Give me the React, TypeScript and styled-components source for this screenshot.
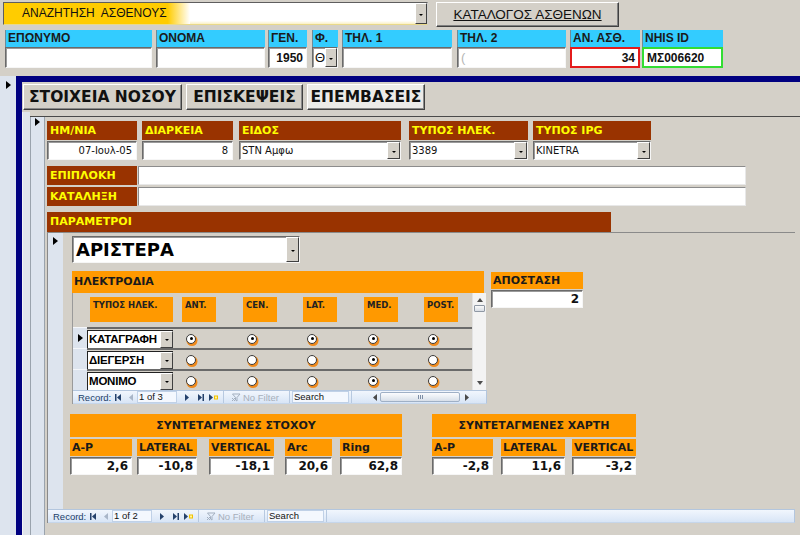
import React from "react";
import styled, { createGlobalStyle, css } from "styled-components";

const Global = createGlobalStyle`
  *, *::before, *::after { box-sizing: border-box; }
  html, body { margin: 0; padding: 0; background: #d4d0c8; }
  body { font-family: "Liberation Sans", Arial, sans-serif; }
  #root { width: 800px; height: 535px; overflow: hidden; }
`;

const sunken = css`
  background: #fff;
  border-style: solid;
  border-width: 1px;
  border-color: #6a6a6a #f6f6f6 #f6f6f6 #6a6a6a;
  box-shadow: inset 1px 1px 0 #9a9a9a;
`;

const Screen = styled.div`
  width: 800px;
  height: 535px;
  background: #d4d0c8;
  display: flex;
  flex-direction: column;
  overflow: hidden;
`;

/* ---------------- header ---------------- */
const Header = styled.div`
  flex: none;
  height: 76px;
  display: flex;
  flex-direction: column;
`;

const SearchRow = styled.div`
  display: flex;
  align-items: flex-start;
  padding: 2px 0 0 3px;
  height: 27px;
`;

const SearchCombo = styled.div`
  width: 425px;
  height: 23px;
  display: flex;
  background: linear-gradient(#ffffff 0, #ffffff 85%, #fbf1c4 100%);
  border: 1px solid #5e5e5e;
  border-right-color: #cfcfcf;
  border-bottom-color: #e9d98a;
`;

const SearchLabel = styled.div`
  width: 186px;
  height: 100%;
  background: linear-gradient(90deg, #ffcc00 0, #ffcc00 88%, #ffffff 100%);
  font-size: 12px;
  color: #111;
  line-height: 21px;
  padding-left: 18px;
  white-space: pre;
`;

const DropBtn = styled.span<{ $w?: number }>`
  flex: none;
  width: ${(p) => p.$w ?? 12}px;
  margin-left: auto;
  align-self: stretch;
  background: #d4d0c8;
  border-style: solid;
  border-width: 1px;
  border-color: #ffffff #404040 #404040 #ffffff;
  display: flex;
  align-items: center;
  justify-content: center;
  &::after {
    content: "";
    border-left: 2px solid transparent;
    border-right: 2px solid transparent;
    border-top: 2px solid #000;
    margin-top: 2px;
  }
`;

const CatalogBtn = styled.div`
  margin-left: 8px;
  width: 183px;
  height: 25px;
  background: #d4d0c8;
  border: 1px solid;
  border-color: #ffffff #404040 #404040 #ffffff;
  box-shadow: inset -1px -1px 0 #808080;
  font-size: 13.5px;
  text-decoration: underline;
  color: #111;
  display: flex;
  align-items: center;
  justify-content: center;
`;

const TopFieldsRow = styled.div`
  display: flex;
  margin-top: 3px;
`;

const TopField = styled.div<{ $w: number; $ml: number }>`
  width: ${(p) => p.$w}px;
  margin-left: ${(p) => p.$ml}px;
  display: flex;
  flex-direction: column;
`;

const CyanLabel = styled.div`
  height: 17px;
  background: #33ccff;
  border-left: 1px solid #6f8b96;
  font-weight: bold;
  font-size: 12px;
  line-height: 17px;
  padding-left: 2px;
  color: #1a1a1a;
  white-space: nowrap;
  overflow: hidden;
`;

const TopInput = styled.div<{ $variant?: string; $align?: string; $drop?: boolean }>`
  height: 21px;
  display: flex;
  align-items: center;
  background: #fff;
  justify-content: ${(p) => (p.$align === "right" ? "flex-end" : "flex-start")};
  padding: ${(p) => (p.$drop ? "0 0 0 2px" : "0 3px")};
  ${(p) =>
    p.$variant === "red"
      ? css`border: 2px solid #e41b1b;`
      : p.$variant === "green"
      ? css`border: 2px solid #33dd33;`
      : sunken}
`;

const TopValue = styled.span<{ $light?: boolean; $plain?: boolean }>`
  font-size: ${(p) => (p.$plain ? "13px" : "12px")};
  font-weight: ${(p) => (p.$plain ? "normal" : "bold")};
  color: ${(p) => (p.$light ? "#b5b5b5" : "#111")};
  white-space: nowrap;
`;

/* ---------------- main frame ---------------- */
const Main = styled.div`
  flex: 1;
  display: flex;
  min-height: 0;
`;

const Selector = styled.div<{ $w: number; $pt: number }>`
  flex: none;
  width: ${(p) => p.$w}px;
  background: #dde4ee;
  padding-top: ${(p) => p.$pt}px;
  display: flex;
  justify-content: center;
  align-items: flex-start;
`;

const Arrow = styled.span`
  width: 0;
  height: 0;
  border-left: 5px solid #000;
  border-top: 4px solid transparent;
  border-bottom: 4px solid transparent;
`;

const Frame = styled.div`
  flex: 1;
  min-width: 0;
  display: flex;
  flex-direction: column;
  border-top: 6px solid #000080;
  border-left: 6px solid #000080;
`;

const TabsRow = styled.div`
  flex: none;
  height: 30px;
  display: flex;
  gap: 4px;
  padding: 2px 0 0 1px;
`;

const Tab = styled.div<{ $w: number; $active?: boolean }>`
  flex: none;
  width: ${(p) => p.$w}px;
  height: 26px;
  background: ${(p) => (p.$active ? "#ecebe8" : "#d4d0c8")};
  border: 1px solid;
  border-color: #ffffff #404040 #404040 #ffffff;
  box-shadow: inset -1px -1px 0 #8a8a8a;
  font-family: "DejaVu Sans", Verdana, sans-serif;
  font-weight: bold;
  font-size: 15.5px;
  color: #111;
  display: flex;
  align-items: center;
  justify-content: center;
  white-space: nowrap;
`;

const TabBody = styled.div`
  flex: 1;
  min-height: 0;
  display: flex;
`;

const Strip = styled.div`
  flex: none;
  width: 8px;
  background: #dfe4eb;
  border-left: 1px solid #f4f4f4;
`;

const OuterSub = styled.div`
  flex: 1;
  min-width: 0;
  margin-top: 4px;
  display: flex;
  border-top: 1px solid #4a4a4a;
`;

const OuterSel = styled(Selector)`
  border-left: 1px solid #9aa3ad;
  border-right: 1px solid #9aa3ad;
`;

const OuterContent = styled.div`
  flex: 1;
  min-width: 0;
  display: flex;
  flex-direction: column;
  padding: 4px 5px 12px 2px;
`;

/* brown fields */
const FieldRow = styled.div`
  display: flex;
  flex: none;
`;

const BrownField = styled.div<{ $w: number; $ml: number }>`
  width: ${(p) => p.$w}px;
  margin-left: ${(p) => p.$ml}px;
  display: flex;
  flex-direction: column;
  gap: 1px;
`;

const BrownLabel = styled.div<{ $w?: number }>`
  flex: none;
  ${(p) => (p.$w ? `width: ${p.$w}px;` : "")}
  height: 19px;
  background: #993300;
  color: #ffff00;
  font-family: "DejaVu Sans", Verdana, sans-serif;
  font-weight: bold;
  font-size: 11px;
  line-height: 19px;
  padding-left: 3px;
  white-space: nowrap;
`;

const FormInput = styled.div<{ $align?: string }>`
  ${sunken}
  height: 19px;
  display: flex;
  align-items: center;
  justify-content: ${(p) => (p.$align === "right" ? "flex-end" : "flex-start")};
  padding: ${(p) => (p.$align === "right" ? "0 4px 0 2px" : "0 0 0 2px")};
  font-family: "DejaVu Sans", Verdana, sans-serif;
  font-size: 10px;
  color: #111;
  white-space: nowrap;
`;

const LongRow = styled.div<{ $mt: number }>`
  display: flex;
  flex: none;
  margin-top: ${(p) => p.$mt}px;
`;

const LongInput = styled.div`
  width: 608px;
  margin-left: 1px;
  height: 19px;
  background: #fff;
  border: 1px solid;
  border-color: #8c8c8c #e8e8e8 #e8e8e8 #8c8c8c;
`;

const ParamBar = styled(BrownLabel)`
  width: 564px;
  height: 20px;
  line-height: 20px;
  margin-top: 6px;
`;

/* nested subform */
const Nested = styled.div`
  flex: 1;
  min-height: 0;
  width: 748px;
  display: flex;
  flex-direction: column;
  border-top: 1px solid #8a8a8a;
  border-left: 1px solid #8a8a8a;
`;

const NestedBody = styled.div`
  flex: 1;
  min-height: 0;
  display: flex;
`;

const NestedContent = styled.div`
  flex: 1;
  display: flex;
  flex-direction: column;
  padding: 3px 0 0 9px;
`;

const BigCombo = styled.div`
  ${sunken}
  width: 228px;
  height: 27px;
  flex: none;
  display: flex;
  align-items: center;
  padding-left: 3px;
  font-family: "DejaVu Sans", Verdana, sans-serif;
  font-weight: bold;
  font-size: 18px;
  color: #000;
`;

const ElecRow = styled.div`
  display: flex;
  margin-top: 8px;
  flex: none;
`;

const ElecBlock = styled.div`
  width: 415px;
  display: flex;
  flex-direction: column;
`;

const OrangeTitle = styled.div<{ $w?: number; $center?: boolean; $h?: number }>`
  ${(p) => (p.$w ? `width: ${p.$w}px;` : "")}
  height: ${(p) => p.$h ?? 22}px;
  line-height: ${(p) => p.$h ?? 22}px;
  background: #ff9900;
  font-family: "DejaVu Sans", Verdana, sans-serif;
  font-weight: bold;
  font-size: 11px;
  color: #1a1a1a;
  padding-left: ${(p) => (p.$center ? 0 : 2)}px;
  text-align: ${(p) => (p.$center ? "center" : "left")};
  white-space: nowrap;
`;

const ContForm = styled.div`
  height: 111px;
  display: flex;
  flex-direction: column;
  border-left: 1px solid #9a9a9a;
`;

const ContMain = styled.div`
  flex: 1;
  display: flex;
  min-height: 0;
`;

const RowsArea = styled.div`
  width: 399px;
  display: flex;
  flex-direction: column;
`;

const colTemplate = "86px 9px 61px 60px 61px 60px 1fr";

const HeadRow = styled.div`
  height: 34px;
  display: flex;
`;

const SelSpacer = styled.div`
  width: 14px;
  flex: none;
`;

const HeadGrid = styled.div`
  flex: 1;
  display: grid;
  grid-template-columns: ${colTemplate};
  align-items: start;
  padding-top: 4px;
`;

const ColHead = styled.div<{ $w: number; $ml?: number }>`
  width: ${(p) => p.$w}px;
  margin-left: ${(p) => p.$ml ?? 0}px;
  height: 25px;
  background: #ff9900;
  font-family: "DejaVu Sans", Verdana, sans-serif;
  font-weight: bold;
  font-size: 8.5px;
  color: #222;
  padding: 3px 0 0 3px;
  white-space: nowrap;
`;

const ERow = styled.div`
  height: 21px;
  display: flex;
`;

const RowSel = styled.div`
  width: 14px;
  flex: none;
  background: #dde4ee;
  border-top: 1px solid #f4f6fa;
  display: flex;
  align-items: center;
  justify-content: center;
`;

const RowGrid = styled.div`
  flex: 1;
  display: grid;
  grid-template-columns: ${colTemplate};
  align-items: center;
  border-top: 2px solid #6a6a6a;
`;

const RowCombo = styled.div`
  width: 86px;
  height: 18px;
  display: flex;
  background: #fff;
  border-left: 1px solid #222;
  border-top: 1px solid #222;
  font-weight: bold;
  font-size: 11.5px;
  color: #000;
  overflow: hidden;
`;

const ComboText = styled.span`
  flex: 1;
  min-width: 0;
  white-space: nowrap;
  padding-left: 1px;
  line-height: 16px;
  letter-spacing: -0.2px;
`;

const RadioCell = styled.div`
  padding-left: 4px;
  display: flex;
  align-items: center;
`;

const Radio = styled.span<{ $on?: boolean }>`
  width: 10px;
  height: 10px;
  border-radius: 50%;
  background: #fff;
  border: 1px solid #3a3a3a;
  box-shadow: 1px 1.5px 0 0.5px #f08a1c;
  display: flex;
  align-items: center;
  justify-content: center;
  &::after {
    content: "";
    display: ${(p) => (p.$on ? "block" : "none")};
    width: 3px;
    height: 3px;
    border-radius: 50%;
    background: #000;
  }
`;

const VScroll = styled.div`
  width: 14px;
  flex: none;
  background: #f3f3f3;
  border-left: 1px solid #e2e2e2;
  display: flex;
  flex-direction: column;
  align-items: center;
`;

const ArrowUp = styled.span<{ $down?: boolean }>`
  width: 0;
  height: 0;
  border-left: 3px solid transparent;
  border-right: 3px solid transparent;
  ${(p) =>
    p.$down
      ? css`border-top: 4px solid #4d4d4d; margin-top: auto; margin-bottom: 5px;`
      : css`border-bottom: 4px solid #4d4d4d; margin-top: 5px;`}
`;

const Thumb = styled.span`
  margin-top: 3px;
  width: 11px;
  height: 7px;
  border: 1px solid #8f98a4;
  border-radius: 1px;
  background: linear-gradient(#fafafa, #d8dde4);
`;

/* distance & coordinates */
const SmallField = styled.div<{ $w: number; $ml?: number; $mt?: number }>`
  width: ${(p) => p.$w}px;
  margin-left: ${(p) => p.$ml ?? 0}px;
  margin-top: ${(p) => p.$mt ?? 0}px;
  display: flex;
  flex-direction: column;
  flex: none;
`;

const SmallLabel = styled.div`
  height: 17px;
  line-height: 17px;
  background: #ff9900;
  font-family: "DejaVu Sans", Verdana, sans-serif;
  font-weight: bold;
  font-size: 11px;
  color: #1a1a1a;
  padding-left: 2px;
  white-space: nowrap;
`;

const NumInput = styled.div`
  ${sunken}
  margin-top: 1px;
  height: 18px;
  display: flex;
  align-items: center;
  justify-content: flex-end;
  padding-right: 3px;
  font-family: "DejaVu Sans", Verdana, sans-serif;
  font-weight: bold;
  font-size: 12px;
  color: #111;
`;

const CoordRow = styled.div`
  display: flex;
  margin-top: 10px;
  flex: none;
`;

const CoordGroup = styled.div<{ $w: number; $ml: number }>`
  width: ${(p) => p.$w}px;
  margin-left: ${(p) => p.$ml}px;
  display: flex;
  flex-direction: column;
`;

const CoordFields = styled.div`
  display: flex;
  margin-top: 2px;
`;

/* navigation bar */
const Nav = styled.div`
  flex: none;
  height: 14px;
  display: flex;
  align-items: center;
  padding-left: 5px;
  background: linear-gradient(#f1f6fd, #d8e5f6);
  border-top: 1px solid #b3c6de;
  border-bottom: 1px solid #c6d6ea;
  border-right: 1px solid #b3c6de;
  font-size: 9.5px;
  color: #22406a;
  white-space: nowrap;
  overflow: hidden;
`;

const NavText = styled.span<{ $w: number; $ml?: number; $muted?: boolean }>`
  flex: none;
  width: ${(p) => p.$w}px;
  margin-left: ${(p) => p.$ml ?? 0}px;
  color: ${(p) => (p.$muted ? "#a7afba" : "#22406a")};
  overflow: hidden;
`;

const NavIconBox = styled.span<{ $w: number; $ml: number }>`
  flex: none;
  width: ${(p) => p.$w}px;
  margin-left: ${(p) => p.$ml}px;
  display: flex;
  align-items: center;
`;

const NavBox = styled.span<{ $w: number; $ml: number }>`
  flex: none;
  width: ${(p) => p.$w}px;
  margin-left: ${(p) => p.$ml}px;
  height: 12px;
  background: #f4f8fe;
  border: 1px solid #c0d1e7;
  font-size: 9.5px;
  line-height: 10px;
  color: #111;
  padding-left: 1px;
  overflow: hidden;
`;

const NavSep = styled.span<{ $ml: number }>`
  flex: none;
  width: 1px;
  height: 13px;
  margin-left: ${(p) => p.$ml}px;
  background: #b7c9e0;
`;

const HTrack = styled.span`
  flex: none;
  width: 80px;
  height: 10px;
  margin-left: 3px;
  border: 1px solid #9fb0c6;
  border-radius: 2px;
  background: linear-gradient(#fbfcfe, #d7dfe9);
  display: flex;
  align-items: center;
  justify-content: center;
  gap: 1px;
`;

const Grip = styled.span`
  width: 1px;
  height: 4px;
  background: #7d8ea6;
`;

const ICON = "#24416b";
const MUTED = "#a9b6c8";

const FirstIcon = () => (
  <svg width="6" height="7" viewBox="0 0 6 7">
    <rect x="0" y="0" width="1.5" height="7" fill={ICON} />
    <path d="M6 0 L2 3.5 L6 7 Z" fill={ICON} />
  </svg>
);
const PrevIcon = () => (
  <svg width="4" height="7" viewBox="0 0 4 7">
    <path d="M4 0 L0 3.5 L4 7 Z" fill={MUTED} />
  </svg>
);
const NextIcon = () => (
  <svg width="4" height="7" viewBox="0 0 4 7">
    <path d="M0 0 L4 3.5 L0 7 Z" fill={ICON} />
  </svg>
);
const LastIcon = () => (
  <svg width="6" height="7" viewBox="0 0 6 7">
    <path d="M0 0 L4 3.5 L0 7 Z" fill={ICON} />
    <rect x="4.5" y="0" width="1.5" height="7" fill={ICON} />
  </svg>
);
const NewIcon = () => (
  <svg width="9" height="7" viewBox="0 0 9 7">
    <path d="M0 0 L4 3.5 L0 7 Z" fill={ICON} />
    <rect x="5" y="1.5" width="4" height="4" fill="#f2c200" />
    <rect x="6" y="2.5" width="2" height="2" fill="#fff3a0" />
  </svg>
);
const FunnelIcon = () => (
  <svg width="9" height="9" viewBox="0 0 9 9">
    <path d="M0.5 1 L8 1 L5 4.5 L5 8 L3.5 7 L3.5 4.5 Z" fill="none" stroke="#a3afbf" strokeWidth="1" />
    <path d="M0 5 L3 8 M3 5 L0 8" stroke="#a3afbf" strokeWidth="1" />
  </svg>
);
const SmallLeft = () => (
  <svg width="4" height="7" viewBox="0 0 4 7">
    <path d="M4 0 L0 3.5 L4 7 Z" fill="#4a4a4a" />
  </svg>
);
const SmallRight = () => (
  <svg width="4" height="7" viewBox="0 0 4 7">
    <path d="M0 0 L4 3.5 L0 7 Z" fill="#4a4a4a" />
  </svg>
);

function NavBar({ count, withScroll }: { count: string; withScroll?: boolean }) {
  return (
    <Nav>
      <NavText $w={37}>Record:</NavText>
      <NavIconBox $w={6} $ml={0}>
        <FirstIcon />
      </NavIconBox>
      <NavIconBox $w={5} $ml={8}>
        <PrevIcon />
      </NavIconBox>
      <NavBox $w={40} $ml={3}>{count}</NavBox>
      <NavIconBox $w={5} $ml={8}>
        <NextIcon />
      </NavIconBox>
      <NavIconBox $w={6} $ml={8}>
        <LastIcon />
      </NavIconBox>
      <NavIconBox $w={9} $ml={5}>
        <NewIcon />
      </NavIconBox>
      <NavSep $ml={5} />
      <NavIconBox $w={9} $ml={8}>
        <FunnelIcon />
      </NavIconBox>
      <NavText $w={46} $ml={2} $muted>
        No Filter
      </NavText>
      <NavSep $ml={0} />
      <NavBox $w={57} $ml={2}>Search</NavBox>
      <NavSep $ml={2} />
      {withScroll && (
        <>
          <NavIconBox $w={4} $ml={21}>
            <SmallLeft />
          </NavIconBox>
          <HTrack>
            <Grip />
            <Grip />
            <Grip />
          </HTrack>
          <NavIconBox $w={4} $ml={5}>
            <SmallRight />
          </NavIconBox>
        </>
      )}
    </Nav>
  );
}

type TopF = {
  label: string;
  w: number;
  ml: number;
  value?: string;
  align?: string;
  variant?: string;
  drop?: boolean;
  light?: boolean;
  plain?: boolean;
};

const topFields: TopF[] = [
  { label: "ΕΠΩΝΥΜΟ", w: 147, ml: 5 },
  { label: "ΟΝΟΜΑ", w: 109, ml: 4 },
  { label: "ΓΕΝ.", w: 39, ml: 3, value: "1950", align: "right" },
  { label: "Φ.", w: 26, ml: 5, value: "Θ", drop: true, plain: true },
  { label: "ΤΗΛ. 1", w: 110, ml: 4 },
  { label: "ΤΗΛ. 2", w: 109, ml: 5, value: "(", light: true, plain: true },
  { label: "ΑΝ. ΑΣΘ.", w: 70, ml: 4, value: "34", align: "right", variant: "red" },
  { label: "NHIS ID", w: 81, ml: 2, value: "ΜΣ006620", variant: "green" },
];

type BF = { label: string; w: number; ml: number; value: string; align?: string; drop?: boolean };
const brownFields: BF[] = [
  { label: "ΗΜ/ΝΙΑ", w: 90, ml: 0, value: "07-Ιουλ-05", align: "right" },
  { label: "ΔΙΑΡΚΕΙΑ", w: 91, ml: 5, value: "8", align: "right" },
  { label: "ΕΙΔΟΣ", w: 162, ml: 6, value: "STN Αμφω", drop: true },
  { label: "ΤΥΠΟΣ ΗΛΕΚ.", w: 119, ml: 8, value: "3389", drop: true },
  { label: "ΤΥΠΟΣ IPG", w: 118, ml: 5, value: "KINETRA", drop: true },
];

const colHeads = [
  { label: "ΤΥΠΟΣ ΗΛΕΚ.", w: 83, ml: 3 },
  null,
  { label: "ANT.", w: 34 },
  { label: "CEN.", w: 34 },
  { label: "LAT.", w: 34 },
  { label: "MED.", w: 34 },
  { label: "POST.", w: 34 },
];

const electrodes = [
  { name: "ΚΑΤΑΓΡΑΦΗ", on: [true, true, true, true, true], current: true },
  { name: "ΔΙΕΓΕΡΣΗ", on: [false, false, false, true, false] },
  { name: "ΜΟΝΙΜΟ", on: [false, false, false, true, false] },
];

const target = [
  { label: "A-P", w: 62, ml: 0, value: "2,6" },
  { label: "LATERAL", w: 60, ml: 5, value: "-10,8" },
  { label: "VERTICAL", w: 65, ml: 12, value: "-18,1" },
  { label: "Arc", w: 47, ml: 11, value: "20,6" },
  { label: "Ring", w: 62, ml: 8, value: "62,8" },
];

const map = [
  { label: "A-P", w: 61, ml: 0, value: "-2,8" },
  { label: "LATERAL", w: 64, ml: 8, value: "11,6" },
  { label: "VERTICAL", w: 64, ml: 7, value: "-3,2" },
];

export default function App() {
  return (
    <Screen>
      <Global />
      <Header>
        <SearchRow>
          <SearchCombo>
            <SearchLabel>{"ΑΝΑΖΗΤΗΣΗ  ΑΣΘΕΝΟΥΣ"}</SearchLabel>
            <DropBtn />
          </SearchCombo>
          <CatalogBtn>ΚΑΤΑΛΟΓΟΣ ΑΣΘΕΝΩΝ</CatalogBtn>
        </SearchRow>
        <TopFieldsRow>
          {topFields.map((f) => (
            <TopField key={f.label} $w={f.w} $ml={f.ml}>
              <CyanLabel>{f.label}</CyanLabel>
              <TopInput $variant={f.variant} $align={f.align} $drop={f.drop}>
                {f.value && (
                  <TopValue $light={f.light} $plain={f.plain}>
                    {f.value}
                  </TopValue>
                )}
                {f.drop && <DropBtn />}
              </TopInput>
            </TopField>
          ))}
        </TopFieldsRow>
      </Header>

      <Main>
        <Selector $w={16} $pt={5}>
          <Arrow />
        </Selector>
        <Frame>
          <TabsRow>
            <Tab $w={159}>ΣΤΟΙΧΕΙΑ ΝΟΣΟΥ</Tab>
            <Tab $w={117}>ΕΠΙΣΚΕΨΕΙΣ</Tab>
            <Tab $w={118} $active>
              ΕΠΕΜΒΑΣΕΙΣ
            </Tab>
          </TabsRow>
          <TabBody>
            <Strip />
            <OuterSub>
              <OuterSel $w={15} $pt={1}>
                <Arrow />
              </OuterSel>
              <OuterContent>
                <FieldRow>
                  {brownFields.map((f) => (
                    <BrownField key={f.label} $w={f.w} $ml={f.ml}>
                      <BrownLabel>{f.label}</BrownLabel>
                      <FormInput $align={f.align}>
                        {f.value}
                        {f.drop && <DropBtn $w={13} />}
                      </FormInput>
                    </BrownField>
                  ))}
                </FieldRow>
                <LongRow $mt={6}>
                  <BrownLabel $w={90}>ΕΠΙΠΛΟΚΗ</BrownLabel>
                  <LongInput />
                </LongRow>
                <LongRow $mt={2}>
                  <BrownLabel $w={90}>ΚΑΤΑΛΗΞΗ</BrownLabel>
                  <LongInput />
                </LongRow>
                <ParamBar>ΠΑΡΑΜΕΤΡΟΙ</ParamBar>

                <Nested>
                  <NestedBody>
                    <Selector $w={15} $pt={4}>
                      <Arrow />
                    </Selector>
                    <NestedContent>
                      <BigCombo>
                        ΑΡΙΣΤΕΡΑ
                        <DropBtn $w={13} />
                      </BigCombo>
                      <ElecRow>
                        <ElecBlock>
                          <OrangeTitle $w={412}>ΗΛΕΚΤΡΟΔΙΑ</OrangeTitle>
                          <ContForm>
                            <ContMain>
                              <RowsArea>
                                <HeadRow>
                                  <SelSpacer />
                                  <HeadGrid>
                                    {colHeads.map((c, i) =>
                                      c ? (
                                        <ColHead key={i} $w={c.w} $ml={c.ml}>
                                          {c.label}
                                        </ColHead>
                                      ) : (
                                        <span key={i} />
                                      )
                                    )}
                                  </HeadGrid>
                                </HeadRow>
                                {electrodes.map((e) => (
                                  <ERow key={e.name}>
                                    <RowSel>{e.current && <Arrow />}</RowSel>
                                    <RowGrid>
                                      <RowCombo>
                                        <ComboText>{e.name}</ComboText>
                                        <DropBtn $w={13} />
                                      </RowCombo>
                                      <span />
                                      {e.on.map((on, i) => (
                                        <RadioCell key={i}>
                                          <Radio $on={on} />
                                        </RadioCell>
                                      ))}
                                    </RowGrid>
                                  </ERow>
                                ))}
                              </RowsArea>
                              <VScroll>
                                <ArrowUp />
                                <Thumb />
                                <ArrowUp $down />
                              </VScroll>
                            </ContMain>
                            <NavBar count="1 of 3" withScroll />
                          </ContForm>
                        </ElecBlock>
                        <SmallField $w={92} $ml={4} $mt={1}>
                          <SmallLabel>ΑΠΟΣΤΑΣΗ</SmallLabel>
                          <NumInput>2</NumInput>
                        </SmallField>
                      </ElecRow>

                      <CoordRow>
                        <CoordGroup $w={332} $ml={-2}>
                          <OrangeTitle $center $h={23}>
                            ΣΥΝΤΕΤΑΓΜΕΝΕΣ ΣΤΟΧΟΥ
                          </OrangeTitle>
                          <CoordFields>
                            {target.map((f) => (
                              <SmallField key={f.label} $w={f.w} $ml={f.ml}>
                                <SmallLabel>{f.label}</SmallLabel>
                                <NumInput>{f.value}</NumInput>
                              </SmallField>
                            ))}
                          </CoordFields>
                        </CoordGroup>
                        <CoordGroup $w={204} $ml={30}>
                          <OrangeTitle $center $h={23}>
                            ΣΥΝΤΕΤΑΓΜΕΝΕΣ ΧΑΡΤΗ
                          </OrangeTitle>
                          <CoordFields>
                            {map.map((f) => (
                              <SmallField key={f.label} $w={f.w} $ml={f.ml}>
                                <SmallLabel>{f.label}</SmallLabel>
                                <NumInput>{f.value}</NumInput>
                              </SmallField>
                            ))}
                          </CoordFields>
                        </CoordGroup>
                      </CoordRow>
                    </NestedContent>
                  </NestedBody>
                  <NavBar count="1 of 2" />
                </Nested>
              </OuterContent>
            </OuterSub>
          </TabBody>
        </Frame>
      </Main>
    </Screen>
  );
}
